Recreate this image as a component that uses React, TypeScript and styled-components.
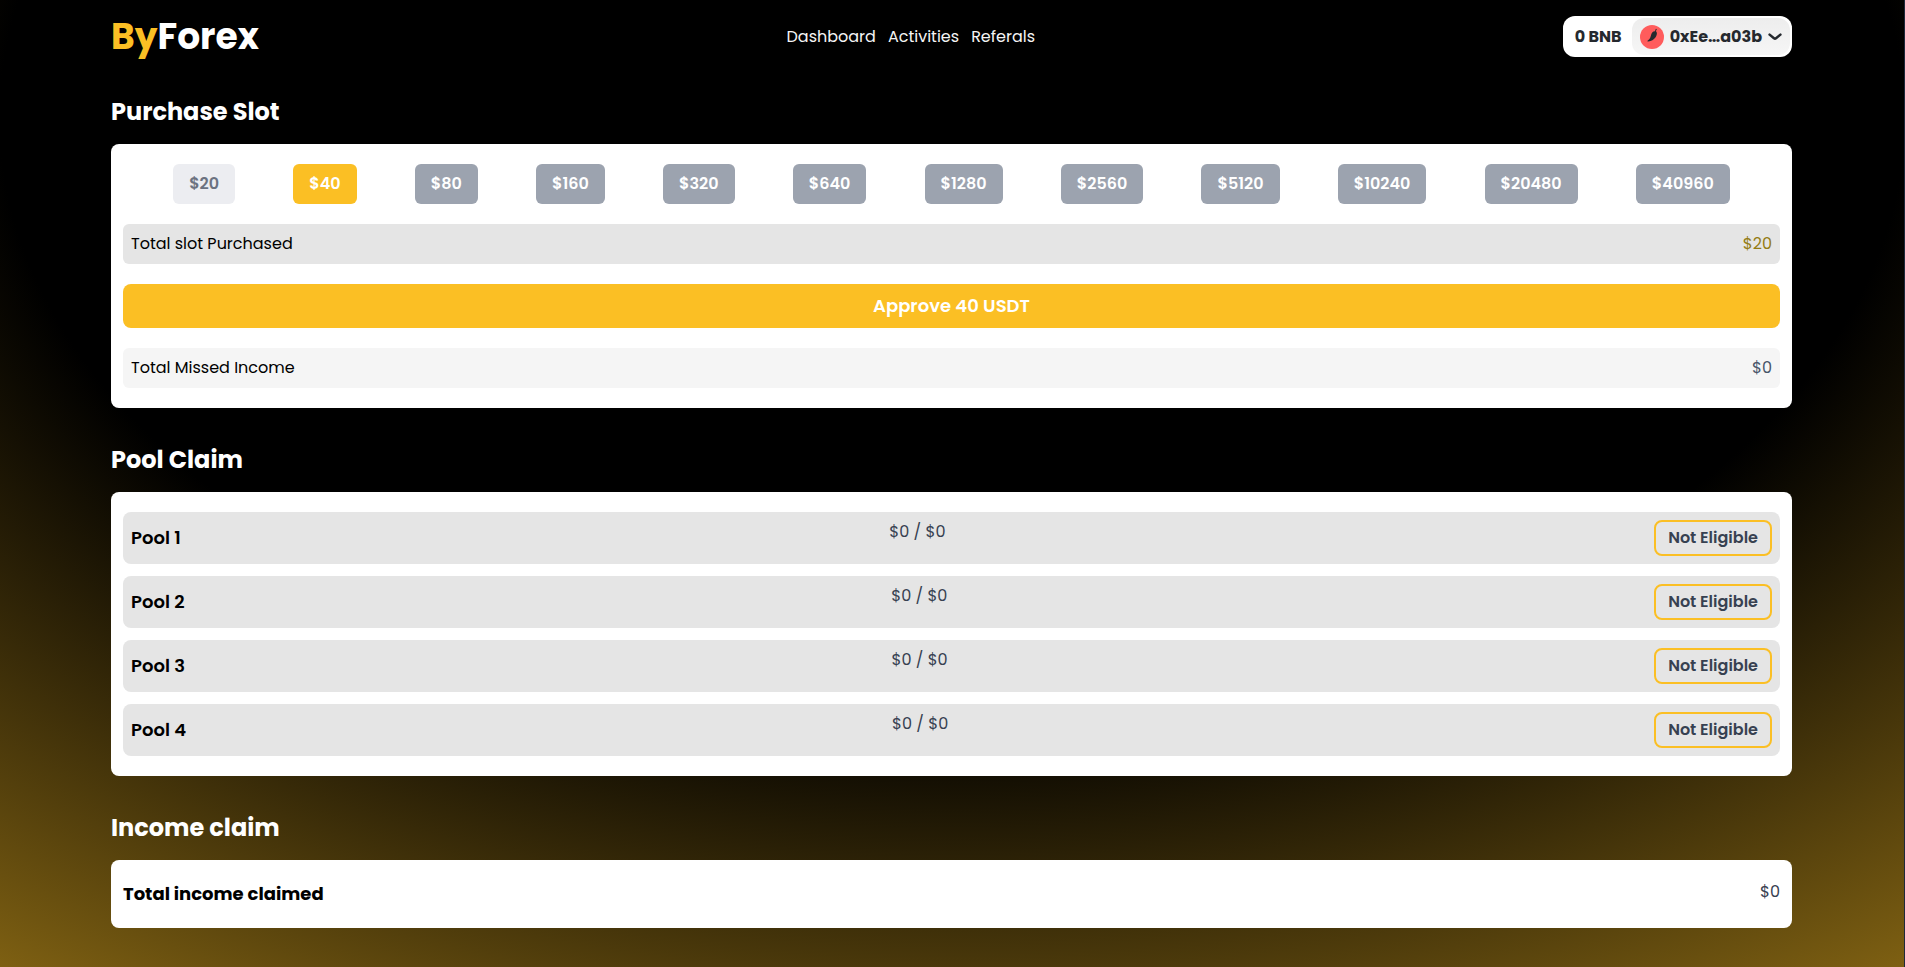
import React from "react";
import styled, { createGlobalStyle } from "styled-components";

const GlobalStyle = createGlobalStyle`
  *, *::before, *::after { box-sizing: border-box; }
  body { margin: 0; background: #1e293b; font-family: Poppins, Inter, sans-serif; font-size: 16px; line-height: 24px; }
  h1, h2, h3, p { margin: 0; }
  button { font: inherit; cursor: pointer; border: 0; }
  a { color: inherit; text-decoration: none; }
`;

const Page = styled.div`
  min-height: 100vh;
  margin-right: 1px;
  padding: 0 112px 39px 111px;
  background: radial-gradient(125% 125% at 50% 10%, #000 40%, #fbbf24 100%) 0 0 / 100% 122vh no-repeat;
`;

const Header = styled.header`
  display: flex;
  align-items: center;
  justify-content: space-between;
  height: 73px;
`;

const Logo = styled.a`
  font-size: 36px;
  line-height: 40px;
  font-weight: 700;
  color: #fff;
  span { color: #fbbf24; }
`;

const Nav = styled.nav`
  display: flex;
  gap: 12px;
  color: #f5f5f5;
`;

const Wallet = styled.button`
  display: flex;
  align-items: center;
  height: 41px;
  padding: 0 2px 0 12px;
  gap: 10px;
  border-radius: 12px;
  background: #fff;
  color: #25292e;
  font-weight: 700;
`;

const Account = styled.span`
  display: flex;
  align-items: center;
  gap: 6px;
  height: 37px;
  padding: 0 8px;
  border-radius: 12px;
  background: linear-gradient(#ededed, #f6f6f6);
`;

const Section = styled.section<{ $first?: boolean }>`
  margin-top: ${(p) => (p.$first ? 23 : 36)}px;
`;

const Title = styled.h2`
  margin-bottom: 16px;
  color: #fff;
  font-size: 24px;
  line-height: 32px;
  font-weight: 700;
`;

const Card = styled.div<{ $gap: number }>`
  display: flex;
  flex-direction: column;
  gap: ${(p) => p.$gap}px;
  padding: 20px 12px;
  border-radius: 8px;
  background: #fff;
`;

const Slots = styled.div`
  display: flex;
  flex-wrap: wrap;
  justify-content: space-evenly;
  gap: 8px;
`;

const tones = {
  owned: ["#ecedf1", "#6b7280"],
  next: ["#fbbf24", "#fff"],
  locked: ["#9ca3af", "#fff"],
};

const Slot = styled.button<{ $tone: keyof typeof tones }>`
  height: 40px;
  padding: 0 16px;
  border-radius: 6px;
  font-weight: 600;
  background: ${(p) => tones[p.$tone][0]};
  color: ${(p) => tones[p.$tone][1]};
`;

const InfoRow = styled.div<{ $light?: boolean }>`
  display: flex;
  justify-content: space-between;
  padding: 8px;
  border-radius: 6px;
  background: ${(p) => (p.$light ? "#f5f5f5" : "#e5e5e5")};
`;

const Amount = styled.p<{ $color?: string }>`
  color: ${(p) => p.$color || "#374151"};
`;

const Approve = styled.button`
  height: 44px;
  border-radius: 8px;
  background: #fbbf24;
  color: #fff;
  font-size: 18px;
  line-height: 28px;
  font-weight: 600;
`;

const PoolRow = styled.div`
  display: flex;
  justify-content: space-between;
  padding: 8px;
  border-radius: 8px;
  background: #e5e5e5;
`;

const RowName = styled.h3<{ $bold?: boolean }>`
  align-self: center;
  font-size: 18px;
  line-height: 28px;
  font-weight: ${(p) => (p.$bold ? 700 : 600)};
`;

const Eligibility = styled.button`
  height: 36px;
  padding: 0 12px;
  border: 2px solid #fbbf24;
  border-radius: 8px;
  background: transparent;
  color: #374151;
  font-weight: 600;
`;

const IncomeRow = styled.div`
  display: flex;
  justify-content: space-between;
`;

const slots = [20, 40, 80, 160, 320, 640, 1280, 2560, 5120, 10240, 20480, 40960];

function Avatar() {
  return (
    <svg width="24" height="24" viewBox="0 0 24 24" aria-hidden="true">
      <circle cx="12" cy="12" r="12" fill="#ff5c5c" />
      <path
        d="M16 3.800L16.900 4.300C16.200 5 16 5.700 16.100 6.500C17.100 7.200 17 8.500 16.700 9.800C15.900 13.200 12.400 16.300 8 16.600C7.300 16.600 7.300 15.900 7.800 15.600C10.300 13.900 10.600 11.700 11.300 9.300C11.800 7.400 13 6 15.100 6.200C15.100 5.300 15.300 4.500 16 3.800Z"
        fill="#25292e"
      />
    </svg>
  );
}

function Chevron() {
  return (
    <svg width="14" height="8" viewBox="0 0 14 8" fill="none" aria-hidden="true">
      <path d="M1.600 1.600L6 5.200Q7 6 8 5.200L12.400 1.600" stroke="#25292e" strokeWidth="2.500" strokeLinecap="round" />
    </svg>
  );
}

export default function App() {
  return (
    <>
      <GlobalStyle />
      <Page>
        <Header>
          <Logo href="#">
            <span>By</span>Forex
          </Logo>
          <Nav>
            <a href="#dashboard">Dashboard</a>
            <a href="#activities">Activities</a>
            <a href="#referals">Referals</a>
          </Nav>
          <Wallet type="button">
            0 BNB
            <Account>
              <Avatar />
              0xEe…a03b
              <Chevron />
            </Account>
          </Wallet>
        </Header>
        <main>
          <Section $first>
            <Title>Purchase Slot</Title>
            <Card $gap={20}>
              <Slots>
                {slots.map((value, i) => (
                  <Slot key={value} type="button" $tone={i === 0 ? "owned" : i === 1 ? "next" : "locked"}>
                    ${value}
                  </Slot>
                ))}
              </Slots>
              <InfoRow>
                <p>Total slot Purchased</p>
                <Amount $color="#947c13">$20</Amount>
              </InfoRow>
              <Approve type="button">Approve 40 USDT</Approve>
              <InfoRow $light>
                <p>Total Missed Income</p>
                <Amount $color="#475569">$0</Amount>
              </InfoRow>
            </Card>
          </Section>
          <Section>
            <Title>Pool Claim</Title>
            <Card $gap={12}>
              {[1, 2, 3, 4].map((n) => (
                <PoolRow key={n}>
                  <RowName>Pool {n}</RowName>
                  <Amount>$0 / $0</Amount>
                  <Eligibility type="button">Not Eligible</Eligibility>
                </PoolRow>
              ))}
            </Card>
          </Section>
          <Section>
            <Title>Income claim</Title>
            <Card $gap={12}>
              <IncomeRow>
                <RowName $bold>Total income claimed</RowName>
                <Amount>$0</Amount>
              </IncomeRow>
            </Card>
          </Section>
        </main>
      </Page>
    </>
  );
}
